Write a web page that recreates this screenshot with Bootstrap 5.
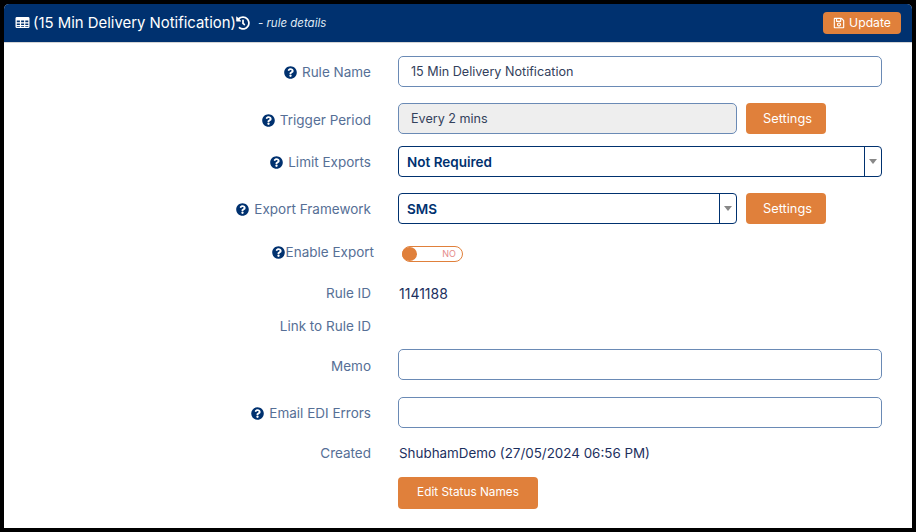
<!DOCTYPE html>
<html lang="en">
<head>
<meta charset="utf-8">
<title>Rule details</title>
<link href="https://cdn.jsdelivr.net/npm/bootstrap@5.3.0/dist/css/bootstrap.min.css" rel="stylesheet">
<style>
html,body{height:100%}
body{background:#000;font-family:Inter,"Liberation Sans",sans-serif;font-size:13px;color:#0b2f66;padding:4px;overflow:hidden}
.sheet{background:#fff;height:524px;border-top-left-radius:5px;border-top-right-radius:5px;overflow:hidden}
.topbar{background:#00316f;height:39px;border-bottom:1px solid #d5d5d5;padding:0 11px 0 11px;color:#fff}
.topbar-title{font-size:14.9px}
.title-ico{margin-right:3px}
.topbar-sub{font-size:11.5px;font-style:italic;color:#dfe8f3;margin-top:2px}
.ico{fill:currentColor;flex:none}
.update-btn{background:#e0803b;border:0;color:#fff;font-size:12.2px;width:78px;height:22px;border-radius:4px;padding:0}
.form-area{padding:13px 30px 0 0}
.line{height:31px;display:flex;align-items:center}
.gap12{margin-top:12px}.gap13{margin-top:13px}.gap14{margin-top:14px}.gap15{margin-top:15px}.gap16{margin-top:16px}.gap17{margin-top:17px}.gap21{margin-top:21px}.gap22{margin-top:22px}
.lbl{width:367px;text-align:right;color:#566f96;font-size:13.5px;font-weight:400;flex:none;display:flex;justify-content:flex-end;align-items:center;gap:5px}
.lbl .ico{color:#00316f}
.lbl-mid{padding-top:2px}
.lbl-low{padding-top:3px}
.fld{margin-left:27px;flex:1;display:flex;gap:9px;align-items:center;min-width:0;font-size:13.4px;color:#1c2f5e}
.id-num{font-size:14px}
.tinput{height:31px;border:1px solid #6a8ab5;border-radius:5px;padding:2px 12px 0;font-size:12.6px;color:#33415c;background:#fff;width:100%;display:flex;align-items:center}
.tinput.ro{background:#eee;width:339px}
.pick{height:31px;border:1px solid #00316f;border-radius:4px;padding:0 0 0 8px;font-weight:600;font-size:13.5px;color:#00316f;display:flex;align-items:center;justify-content:space-between;width:100%}
.pick-text{padding-top:2px}
.pick.half{width:339px}
.pick-arrow{width:17px;height:100%;border-left:1px solid #00316f;display:flex;align-items:center;justify-content:center;flex:none}
.pick-arrow i{border:4px solid transparent;border-top:5px solid #888;border-bottom:0;display:block}
.act-btn{background:#e0803b;border:0;color:#fff;font-size:12.8px;width:80px;height:31px;border-radius:4px;padding:0 0 0 3px}
.switcher{width:61px;height:16px;border:1px solid #e0803b;border-radius:8px;position:relative;color:#e58a8a;font-size:9px;display:flex;align-items:center;justify-content:flex-end;padding-right:6px;background:#fff}
.switcher::before{content:"";position:absolute;left:-1px;top:0;width:15px;height:14px;border-radius:50%;background:#e0803b}
.wide-btn{background:#e0803b;border:0;color:#fff;font-size:11.8px;width:140px;height:32px;border-radius:4px;padding:0}
.toggle-line{height:16px}
.toggle-line .lbl{width:370px;margin-top:-3px;gap:1px}
.toggle-line .fld{padding-left:1px}
.text-line{height:20px}
.text-line .fld{padding-left:1px}
.btn-line{height:32px}
</style>
</head>
<body>
<div class="sheet">
  <div class="topbar d-flex align-items-center justify-content-between">
    <div class="d-flex align-items-center">
      <span class="topbar-title d-flex align-items-center">
        <svg class="ico title-ico" width="15" height="13" viewBox="0 0 15 13"><path fill-rule="evenodd" d="M1.5 1h12A1.2 1.2 0 0 1 14.500 2.200v8.600A1.200 1.200 0 0 1 13.500 12h-12A1.200 1.200 0 0 1 .5 10.800V2.200A1.200 1.200 0 0 1 1.500 1zM1.800 4.500v1.800h3.100V4.500zm4.300 0v1.800h3V4.500zm4.200 0v1.800h3V4.500zM1.800 7.400v1.700h3.100V7.400zm4.300 0v1.700h3V7.400zm4.200 0v1.700h3V7.400zM1.800 10.100v.7h3.100v-.7zm4.300 0v.7h3v-.7zm4.200 0v.7h3v-.7z"/></svg>
        (15 Min Delivery Notification)<svg class="ico" width="14" height="14" viewBox="0 0 512 512"><path d="M504 255.531c.253 136.64-111.18 248.372-247.82 248.468-59.015.042-113.223-20.53-155.822-54.911-11.077-8.94-11.905-25.541-1.839-35.607l11.267-11.267c8.609-8.609 22.353-9.551 31.891-1.984C173.062 425.135 212.781 440 256 440c101.705 0 184-82.311 184-184 0-101.705-82.311-184-184-184-48.814 0-93.149 18.969-126.068 49.932l50.754 50.754c10.08 10.08 2.941 27.314-11.313 27.314H24c-8.837 0-16-7.163-16-16V38.627c0-14.254 17.234-21.393 27.314-11.314l49.372 49.372C129.209 34.136 189.552 8 256 8c136.81 0 247.747 110.78 248 247.531zm-180.912 78.784l9.823-12.63c8.138-10.463 6.253-25.542-4.21-33.679L288 256.349V152c0-13.255-10.745-24-24-24h-16c-13.255 0-24 10.745-24 24v135.651l65.409 50.874c10.463 8.137 25.541 6.253 33.679-4.21z"/></svg>
      </span>
      <span class="topbar-sub ms-2">- rule details</span>
    </div>
    <button type="button" class="btn update-btn d-flex align-items-center justify-content-center gap-1">
      <svg class="ico" width="12" height="12" viewBox="0 0 448 512"><path d="M433.941 129.941l-83.882-83.882A48 48 0 0 0 316.118 32H48C21.49 32 0 53.49 0 80v352c0 26.51 21.49 48 48 48h352c26.51 0 48-21.49 48-48V163.882a48 48 0 0 0-14.059-33.941zM272 80v80H144V80h128zm122 352H54a6 6 0 0 1-6-6V86a6 6 0 0 1 6-6h42v104c0 13.255 10.745 24 24 24h176c13.255 0 24-10.745 24-24V83.882l78.243 78.243a6 6 0 0 1 1.757 4.243V426a6 6 0 0 1-6 6zM224 232c-48.523 0-88 39.477-88 88s39.477 88 88 88 88-39.477 88-88-39.477-88-88-88zm0 128c-22.056 0-40-17.944-40-40s17.944-40 40-40 40 17.944 40 40-17.944 40-40 40z"/></svg>
      Update
    </button>
  </div>
  <div class="form-area">
    <div class="line">
      <div class="lbl lbl-mid"><svg class="ico" width="13" height="13" viewBox="0 0 512 512"><use href="#q"/></svg>Rule Name</div>
      <div class="fld"><div class="tinput">15 Min Delivery Notification</div></div>
    </div>
    <div class="line gap16">
      <div class="lbl lbl-low"><svg class="ico" width="13" height="13" viewBox="0 0 512 512"><use href="#q"/></svg>Trigger Period</div>
      <div class="fld"><div class="tinput ro">Every 2 mins</div><button type="button" class="btn act-btn">Settings</button></div>
    </div>
    <div class="line gap12">
      <div class="lbl lbl-mid"><svg class="ico" width="13" height="13" viewBox="0 0 512 512"><use href="#q"/></svg>Limit Exports</div>
      <div class="fld"><div class="pick"><span class="pick-text">Not Required</span><span class="pick-arrow"><i></i></span></div></div>
    </div>
    <div class="line gap16">
      <div class="lbl lbl-mid"><svg class="ico" width="13" height="13" viewBox="0 0 512 512"><use href="#q"/></svg>Export Framework</div>
      <div class="fld"><div class="pick half"><span class="pick-text">SMS</span><span class="pick-arrow"><i></i></span></div><button type="button" class="btn act-btn">Settings</button></div>
    </div>
    <div class="line toggle-line gap22">
      <div class="lbl"><svg class="ico" width="13" height="13" viewBox="0 0 512 512"><use href="#q"/></svg>Enable Export</div>
      <div class="fld"><div class="switcher">NO</div></div>
    </div>
    <div class="line text-line gap21">
      <div class="lbl">Rule ID</div>
      <div class="fld id-num">1141188</div>
    </div>
    <div class="line text-line gap13">
      <div class="lbl">Link to Rule ID</div>
      <div class="fld"></div>
    </div>
    <div class="line gap13">
      <div class="lbl lbl-low">Memo</div>
      <div class="fld"><div class="tinput"></div></div>
    </div>
    <div class="line gap17">
      <div class="lbl lbl-mid"><svg class="ico" width="13" height="13" viewBox="0 0 512 512"><use href="#q"/></svg>Email EDI Errors</div>
      <div class="fld"><div class="tinput"></div></div>
    </div>
    <div class="line text-line gap15">
      <div class="lbl">Created</div>
      <div class="fld">ShubhamDemo (27/05/2024 06:56 PM)</div>
    </div>
    <div class="line btn-line gap14">
      <div class="lbl"></div>
      <div class="fld"><button type="button" class="btn wide-btn">Edit Status Names</button></div>
    </div>
  </div>
</div>
<svg width="0" height="0" class="position-absolute"><defs><path id="q" d="M504 256c0 136.997-111.043 248-248 248S8 392.997 8 256C8 119.083 119.043 8 256 8s248 111.083 248 248zM262.655 90c-54.497 0-89.255 22.957-116.549 63.758-3.536 5.286-2.353 12.415 2.715 16.258l34.699 26.31c5.205 3.947 12.621 3.008 16.665-2.122 17.864-22.658 30.113-35.797 57.303-35.797 20.429 0 45.698 13.148 45.698 32.958 0 14.976-12.363 22.667-32.534 33.976C247.128 238.528 216 254.941 216 296v4c0 6.627 5.373 12 12 12h56c6.627 0 12-5.373 12-12v-1.333c0-28.462 83.186-29.647 83.186-106.667 0-58.002-60.165-102-116.531-102zM256 338c-25.365 0-46 20.635-46 46 0 25.364 20.635 46 46 46s46-20.636 46-46c0-25.365-20.635-46-46-46z"/></defs></svg>
<script src="https://cdn.jsdelivr.net/npm/bootstrap@5.3.0/dist/js/bootstrap.bundle.min.js"></script>
</body>
</html>
